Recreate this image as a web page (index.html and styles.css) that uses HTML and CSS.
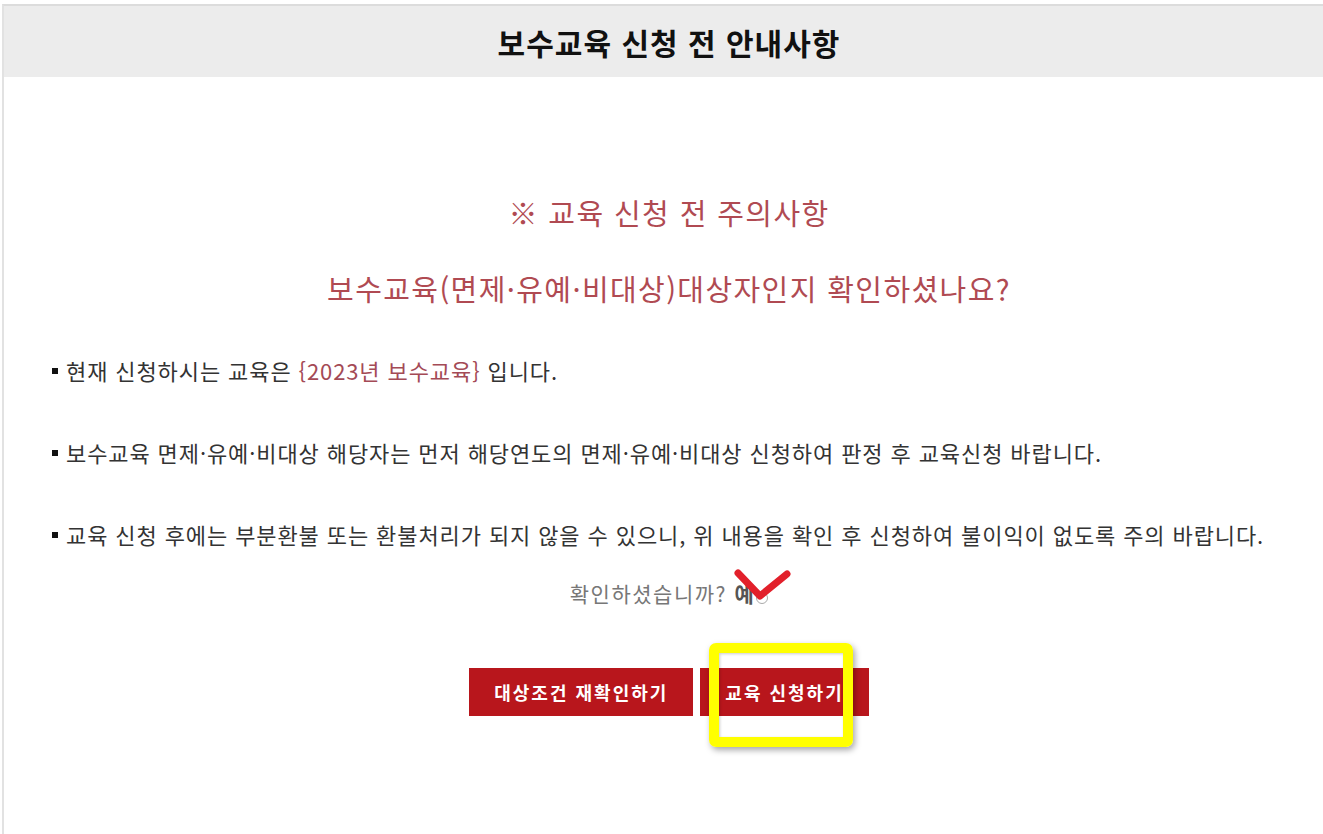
FILE: index.html
```html
<!DOCTYPE html>
<html lang="ko">
<head>
    <meta charset="UTF-8">
    <meta name="viewport" content="width=device-width, initial-scale=1.0">
    <title>보수교육 신청 전 안내사항</title>
    <link rel="stylesheet" href="styles.css">
</head>
<body>
    <div class="frame">
        <div class="header">
            <h1>보수교육 신청 전 안내사항</h1>
        </div>
        <div class="content">
            <h2 class="notice-title">※ 교육 신청 전 주의사항</h2>
            <h2 class="notice-question">보수교육(면제·유예·비대상)대상자인지 확인하셨나요?</h2>

            <ul class="rules">
                <li>현재 신청하시는 교육은 <span class="hl">{2023년 보수교육}</span> 입니다.</li>
                <li>보수교육 면제·유예·비대상 해당자는 먼저 해당연도의 면제·유예·비대상 신청하여 판정 후 교육신청 바랍니다.</li>
                <li>교육 신청 후에는 부분환불 또는 환불처리가 되지 않을 수 있으니, 위 내용을 확인 후 신청하여 불이익이 없도록 주의 바랍니다.</li>
            </ul>

            <div class="confirm">
                확인하셨습니까? <label class="yes">예<span class="radio"></span></label>
                <svg class="check" width="60" height="34" viewBox="0 0 60 34">
                    <polyline points="4,5 26,28 53,6" fill="none" stroke="#e2202b" stroke-width="7" stroke-linecap="round" stroke-linejoin="round"/>
                </svg>
            </div>

            <div class="actions">
                <button class="btn">대상조건 재확인하기</button>
                <button class="btn btn-apply">교육 신청하기
                    <span class="mark"></span>
                </button>
            </div>
        </div>
    </div>
</body>
</html>
```

FILE: styles.css
```css
html, body {
    margin: 0;
    padding: 0;
    overflow: hidden;
    background-color: #fff;
    font-family: 'Noto Sans CJK KR', 'Noto Sans', sans-serif;
    color: #333;
}
.frame {
    width: 1330px;
    height: 828px;
    margin: 4px 0 0 2px;
    border-top: 2px solid #dcdcdc;
    border-left: 2px solid #e2e2e2;
}
.header {
    height: 71px;
    background-color: #ececec;
    display: flex;
    align-items: center;
    justify-content: center;
}
.header h1 {
    margin: 0;
    font-size: 30px;
    font-weight: bold;
    color: #111;
    letter-spacing: 1px;
}
.content {
    padding: 115px 0 0 48px;
}
.notice-title, .notice-question {
    margin: 0;
    font-size: 29px;
    line-height: 40px;
    font-weight: normal;
    color: #b04a52;
    text-align: center;
    letter-spacing: 1.4px;
    margin-left: -48px;
}
.notice-question {
    margin-top: 36px;
}
.rules {
    list-style: none;
    margin: 47px 0 0;
    padding: 0;
}
.rules li {
    font-size: 22px;
    line-height: 30px;
    letter-spacing: 0.9px;
    margin-bottom: 52px;
    padding-left: 14px;
    position: relative;
}
.rules li:last-child {
    margin-bottom: 0;
}
.rules li::before {
    content: "";
    position: absolute;
    left: 0;
    top: 13px;
    width: 6px;
    height: 6px;
    background-color: #111;
}
.hl {
    color: #a44a56;
}
.confirm {
    margin: 29px 0 0 -48px;
    text-align: center;
    font-size: 21px;
    line-height: 30px;
    letter-spacing: 1.5px;
    color: #777;
    position: relative;
}
.yes {
    font-weight: bold;
    color: #555;
}
.radio {
    display: inline-block;
    width: 10px;
    height: 10px;
    border: 1px solid #aaa;
    border-radius: 50%;
    margin-left: 1px;
    vertical-align: -2px;
}
.check {
    position: absolute;
    left: 730px;
    top: -10px;
}
.actions {
    margin: 60px 0 0 -48px;
    display: flex;
    justify-content: center;
    gap: 7px;
}
.btn {
    height: 48px;
    padding: 0 25px;
    border: none;
    background-color: #b8161c;
    color: #fff;
    font-family: inherit;
    font-size: 18px;
    font-weight: bold;
    letter-spacing: 2px;
    position: relative;
}
.mark {
    position: absolute;
    left: 9px;
    top: -25px;
    width: 124px;
    height: 84px;
    border: 10px solid #ffff00;
    border-radius: 7px;
    box-shadow: 2px 3px 6px rgba(0, 0, 0, 0.35), inset 1px 1px 3px rgba(0, 0, 0, 0.2);
}
```
